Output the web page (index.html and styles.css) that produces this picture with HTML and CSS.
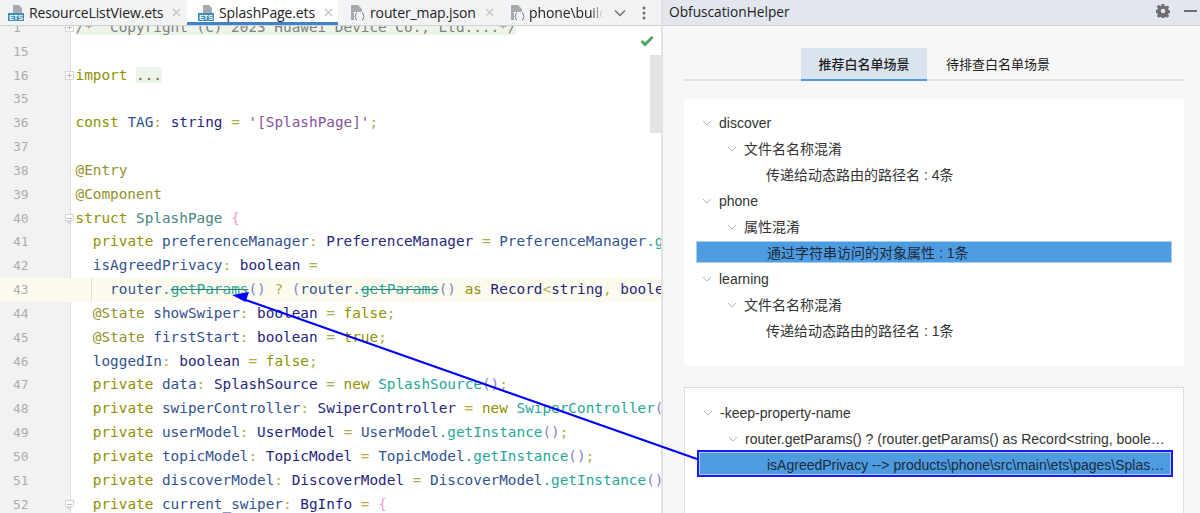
FILE: index.html
```html
<!DOCTYPE html>
<html lang="en">
<head>
<meta charset="utf-8">
<title>ObfuscationHelper</title>
<link rel="stylesheet" href="styles.css">
</head>
<body>
<div class="app">
  <section class="editor">
    <div class="tabs">
      <div class="tab t1">
        <svg class="ficon" viewBox="0 0 16 16"><path class="doc" d="M5 0h6l3 3v6H5z"/><rect class="ets" x="0" y="8" width="16" height="8"/><text class="etstxt" x="8" y="15">ETS</text></svg>
        <span class="tname">ResourceListView.ets</span>
        <svg class="close" viewBox="0 0 10 10"><path d="M1 1l8 8M9 1l-8 8"/></svg>
      </div>
      <div class="tab t2 active">
        <svg class="ficon" viewBox="0 0 16 16"><path class="doc" d="M5 0h6l3 3v6H5z"/><rect class="ets" x="0" y="8" width="16" height="8"/><text class="etstxt" x="8" y="15">ETS</text></svg>
        <span class="tname">SplashPage.ets</span>
        <svg class="close" viewBox="0 0 10 10"><path d="M1 1l8 8M9 1l-8 8"/></svg>
      </div>
      <div class="tab t3">
        <svg class="ficon" viewBox="0 0 16 16"><path class="doc" d="M2 0h7l4 4v11H2z"/><rect class="badge" x="5" y="7" width="11" height="9"/><path class="brace" d="M8 8c-2 0-1 3-2 3.500 1 .5 0 3.500 2 3.500M13 8c2 0 1 3 2 3.500-1 .5 0 3.500-2 3.500"/></svg>
        <span class="tname">router_map.json</span>
        <svg class="close" viewBox="0 0 10 10"><path d="M1 1l8 8M9 1l-8 8"/></svg>
      </div>
      <div class="tab t4">
        <svg class="ficon" viewBox="0 0 16 16"><path class="doc" d="M2 0h7l4 4v11H2z"/><rect class="badge" x="5" y="7" width="11" height="9"/><path class="brace" d="M8 8c-2 0-1 3-2 3.500 1 .5 0 3.500 2 3.500M13 8c2 0 1 3 2 3.500-1 .5 0 3.500-2 3.500"/></svg>
        <span class="tname fade">phone\build</span>
      </div>
      <div class="tabtools">
        <svg class="chev" viewBox="0 0 12 8"><path d="M1 1.500l5 5 5-5"/></svg>
        <svg class="dots" viewBox="0 0 4 14"><circle cx="2" cy="2" r="1.500"/><circle cx="2" cy="7" r="1.500"/><circle cx="2" cy="12" r="1.500"/></svg>
      </div>
    </div>
    <div class="codewrap">
      <div class="code">
        <div class="row"><span class="num">1</span><span class="fold plus"></span><span class="src"><span class="hl c">/*  Copyright (C) 2023 Huawei Device Co., Ltd....*/</span></span></div>
        <div class="row"><span class="num">15</span><span class="src"></span></div>
        <div class="row"><span class="num">16</span><span class="fold plus"></span><span class="src"><span class="k">import</span> <span class="hl o">...</span></span></div>
        <div class="row"><span class="num">35</span><span class="src"></span></div>
        <div class="row"><span class="num">36</span><span class="src"><span class="k">const</span> <span class="v">TAG</span><span class="p">:</span> <span class="ty">string</span> <span class="p">=</span> <span class="s">'[SplashPage]'</span><span class="p">;</span></span></div>
        <div class="row"><span class="num">37</span><span class="src"></span></div>
        <div class="row"><span class="num">38</span><span class="src"><span class="a">@Entry</span></span></div>
        <div class="row"><span class="num">39</span><span class="src"><span class="a">@Component</span></span></div>
        <div class="row"><span class="num">40</span><span class="fold open"></span><span class="src"><span class="k">struct</span> <span class="cn">SplashPage</span> <span class="b">{</span></span></div>
        <div class="row"><span class="num">41</span><span class="src">  <span class="k">private</span> <span class="v">preferenceManager</span><span class="p">:</span> <span class="ty">PreferenceManager</span> <span class="p">=</span> <span class="v">PreferenceManager</span><span class="m">.getInstance</span><span class="par">()</span></span></div>
        <div class="row"><span class="num">42</span><span class="src">  <span class="v">isAgreedPrivacy</span><span class="p">:</span> <span class="ty">boolean</span> <span class="p">=</span></span></div>
        <div class="row cur"><span class="num">43</span><span class="guide"></span><span class="src">    <span class="v">router</span><span class="m">.</span><span class="m del">getParams</span><span class="par">()</span> <span class="p">?</span> <span class="par">(</span><span class="v">router</span><span class="m">.</span><span class="m del">getParams</span><span class="par">()</span> <span class="k">as</span> <span class="ty">Record</span><span class="p">&lt;</span><span class="ty">string</span><span class="p">,</span> <span class="ty">boolean</span><span class="p">&gt;</span><span class="par">)</span></span></div>
        <div class="row"><span class="num">44</span><span class="src">  <span class="a">@State</span> <span class="v">showSwiper</span><span class="p">:</span> <span class="ty">boolean</span> <span class="p">=</span> <span class="k">false</span><span class="p">;</span></span></div>
        <div class="row"><span class="num">45</span><span class="src">  <span class="a">@State</span> <span class="v">firstStart</span><span class="p">:</span> <span class="ty">boolean</span> <span class="p">=</span> <span class="k">true</span><span class="p">;</span></span></div>
        <div class="row"><span class="num">46</span><span class="src">  <span class="v">loggedIn</span><span class="p">:</span> <span class="ty">boolean</span> <span class="p">=</span> <span class="k">false</span><span class="p">;</span></span></div>
        <div class="row"><span class="num">47</span><span class="src">  <span class="k">private</span> <span class="v">data</span><span class="p">:</span> <span class="ty">SplashSource</span> <span class="p">=</span> <span class="k">new</span> <span class="m">SplashSource</span><span class="par">()</span><span class="p">;</span></span></div>
        <div class="row"><span class="num">48</span><span class="src">  <span class="k">private</span> <span class="v">swiperController</span><span class="p">:</span> <span class="ty">SwiperController</span> <span class="p">=</span> <span class="k">new</span> <span class="m">SwiperController</span><span class="par">()</span><span class="p">;</span></span></div>
        <div class="row"><span class="num">49</span><span class="src">  <span class="k">private</span> <span class="v">userModel</span><span class="p">:</span> <span class="ty">UserModel</span> <span class="p">=</span> <span class="v">UserModel</span><span class="m">.getInstance</span><span class="par">()</span><span class="p">;</span></span></div>
        <div class="row"><span class="num">50</span><span class="src">  <span class="k">private</span> <span class="v">topicModel</span><span class="p">:</span> <span class="ty">TopicModel</span> <span class="p">=</span> <span class="v">TopicModel</span><span class="m">.getInstance</span><span class="par">()</span><span class="p">;</span></span></div>
        <div class="row"><span class="num">51</span><span class="src">  <span class="k">private</span> <span class="v">discoverModel</span><span class="p">:</span> <span class="ty">DiscoverModel</span> <span class="p">=</span> <span class="v">DiscoverModel</span><span class="m">.getInstance</span><span class="par">()</span><span class="p">;</span></span></div>
        <div class="row"><span class="num">52</span><span class="fold open"></span><span class="src">  <span class="k">private</span> <span class="v">current_swiper</span><span class="p">:</span> <span class="ty">BgInfo</span> <span class="p">=</span> <span class="b">{</span></span></div>
      </div>
      <svg class="check" viewBox="0 0 14 12"><path d="M1.500 6l3.500 3.500 7.500-7.500"/></svg>
      <div class="thumb"></div>
    </div>
  </section>
  <aside class="tool">
    <header class="toolhead">
      <span class="tooltitle">ObfuscationHelper</span>
      <svg class="gear" viewBox="0 0 14 14"><path fill-rule="evenodd" d="M5.800 0h2.400l.4 2 1.200.5 1.700-1.100 1.700 1.700-1.100 1.700.5 1.200 2 .4v2.400l-2 .4-.5 1.200 1.100 1.700-1.700 1.700-1.700-1.100-1.200.5-.4 2H5.800l-.4-2-1.200-.5-1.700 1.100-1.700-1.700 1.100-1.700-.5-1.200-2-.4V5.800l2-.4.5-1.200-1.100-1.700 1.700-1.700 1.700 1.100 1.200-.5zM7 4.800a2.200 2.200 0 1 0 0 4.400 2.200 2.200 0 0 0 0-4.400z"/></svg>
      <span class="minus"></span>
    </header>
    <div class="toolbody">
      <nav class="seg">
        <span class="segtab on">推荐白名单场景</span>
        <span class="segtab">待排查白名单场景</span>
      </nav>
      <div class="panel top">
        <div class="node l0"><svg class="tw" viewBox="0 0 10 6"><path d="M1 1l4 4 4-4"/></svg>discover</div>
        <div class="node l1"><svg class="tw" viewBox="0 0 10 6"><path d="M1 1l4 4 4-4"/></svg>文件名名称混淆</div>
        <div class="node l2">传递给动态路由的路径名 : 4条</div>
        <div class="node l0"><svg class="tw" viewBox="0 0 10 6"><path d="M1 1l4 4 4-4"/></svg>phone</div>
        <div class="node l1"><svg class="tw" viewBox="0 0 10 6"><path d="M1 1l4 4 4-4"/></svg>属性混淆</div>
        <div class="node l2 sel">通过字符串访问的对象属性 : 1条</div>
        <div class="node l0"><svg class="tw" viewBox="0 0 10 6"><path d="M1 1l4 4 4-4"/></svg>learning</div>
        <div class="node l1"><svg class="tw" viewBox="0 0 10 6"><path d="M1 1l4 4 4-4"/></svg>文件名名称混淆</div>
        <div class="node l2">传递给动态路由的路径名 : 1条</div>
      </div>
      <div class="panel bottom">
        <div class="node l0"><svg class="tw" viewBox="0 0 10 6"><path d="M1 1l4 4 4-4"/></svg><span class="ell">-keep-property-name</span></div>
        <div class="node l1"><svg class="tw" viewBox="0 0 10 6"><path d="M1 1l4 4 4-4"/></svg><span class="ell">router.getParams() ? (router.getParams() as Record&lt;string, boolean&gt;)['isAgreedPrivacy']</span></div>
        <div class="node l2 sel marked"><span class="ell">isAgreedPrivacy --&gt; products\phone\src\main\ets\pages\SplashPage.ets</span></div>
      </div>
    </div>
  </aside>
  <svg class="arrow" viewBox="0 0 1200 513"><path class="shaft" d="M697 459L240 298"/><path class="head" d="M232 295l17-3-3.500 10z"/></svg>
</div>
</body>
</html>
```
FILE: styles.css
```css
* { box-sizing: border-box; }
html, body { margin: 0; height: 100%; overflow: hidden; }
body { background: #fff; }
.app { position: relative; display: flex; width: 1200px; height: 513px; overflow: hidden; }

.editor { width: 663px; flex: none; display: flex; flex-direction: column; border-right: 2px solid #e2e2e2; }
.tabs { height: 26px; flex: none; display: flex; align-items: stretch; background: #f2f3f5; border-bottom: 1px solid #cfd1d4; font: 14px/24px "Open Sans", "Noto Sans", sans-serif; color: #222; }
.tab { display: flex; align-items: center; white-space: nowrap; overflow: hidden; }
.t1 { width: 187px; padding-left: 8px; }
.t2 { width: 151px; padding-left: 11px; background: #fff; box-shadow: inset 0 -3px 0 #4083c9; }
.t3 { width: 171px; padding-left: 11px; }
.t4 { width: 97px; padding-left: 0; }
.ficon { width: 16px; height: 16px; flex: none; margin-right: 5px; }
.t4 .ficon { margin-right: 4px; }
.doc { fill: #a6abb2; }
.ets { fill: #3d8fb8; }
.etstxt { font: bold 7px "Liberation Sans", sans-serif; fill: #fff; text-anchor: middle; }
.badge { fill: #f2f3f5; }
.brace { fill: none; stroke: #6e6e6e; stroke-width: 1; }
.tname { letter-spacing: -.12px; }
.fade { width: 74px; overflow: hidden; -webkit-mask-image: linear-gradient(90deg, #000 84%, transparent); mask-image: linear-gradient(90deg, #000 84%, transparent); }
.close { width: 9px; height: 9px; margin-left: 9px; flex: none; }
.close path { stroke: #bcbcbc; stroke-width: 1.200; fill: none; }
.tabtools { display: flex; align-items: center; flex: 1; padding-left: 8px; }
.chev { width: 12px; height: 8px; }
.chev path { fill: none; stroke: #6e6e6e; stroke-width: 1.500; }
.dots { width: 4px; height: 14px; margin-left: 16px; }
.dots circle { fill: #6e6e6e; }

.codewrap { position: relative; flex: 1; overflow: hidden; }
.code { margin-top: -10px; }
.row { position: relative; display: flex; height: 23.83px; font: 14.36px/23.83px "DejaVu Sans Mono", monospace; white-space: pre; }
.num { width: 71px; flex: none; padding-left: 13px; background: #f2f2f2; border-right: 1px solid #dedede; color: #adadad; font-size: 13px; }
.src { padding-left: 4.500px; color: #34528f; }
.cur { background: #fdfbf0; }
.cur .num { background: #fdfbf0; border-right-color: #fdfbf0; }
.guide { position: absolute; left: 91px; top: 0; bottom: 0; border-left: 1px solid #e4e2d8; }
.fold { position: absolute; left: 65px; top: 7px; width: 9px; height: 9px; background: #fff; border: 1px solid #d6d6d6; }
.fold.plus::before { content: ""; position: absolute; left: 1px; right: 1px; top: 3px; border-top: 1px solid #bdbdbd; }
.fold.plus::after { content: ""; position: absolute; top: 1px; bottom: 1px; left: 3px; border-left: 1px solid #bdbdbd; }
.fold.open { border-bottom: 0; height: 7px; }
.fold.open::before { content: ""; position: absolute; left: 1px; right: 1px; top: 3px; border-top: 1px solid #bdbdbd; }
.fold.open::after { content: ""; position: absolute; left: -1px; top: 5px; border: 4.500px solid transparent; border-top-color: #d6d6d6; border-bottom: 0; }

.k { color: #8f9100; }
.a { color: #94912a; }
.v { color: #34528f; }
.ty { color: #26267c; }
.cn { color: #4a8682; }
.p { color: #b0ac4c; }
.s { color: #84549a; }
.b { color: #f29ccf; }
.m { color: #27a797; }
.par { color: #8085cc; }
.c { color: #808080; }
.hl { background: #edf5ea; }
.o { color: #70703a; }
.del { text-decoration: line-through; text-decoration-color: #2f7f74; }

.check { position: absolute; right: 7px; top: 9px; width: 14px; height: 12px; }
.check path { fill: none; stroke: #49a35c; stroke-width: 2.800; }
.thumb { position: absolute; right: 0; top: 29px; width: 11px; height: 78px; background: #e3e3e3; }

.tool { flex: 1; min-width: 0; display: flex; flex-direction: column; background: #f7f7f7; }
.toolhead { height: 26px; flex: none; display: flex; align-items: center; padding: 0 0 3px 6px; background: #e2e6ee; border-bottom: 1px solid #cfd1d4; font: 13.700px "Open Sans", "Noto Sans", sans-serif; color: #222; }
.tooltitle { flex: 1; }
.gear { width: 14px; height: 14px; fill: #6e6e6e; }
.minus { width: 13px; height: 2px; margin-left: 14px; margin-right: 3px; background: #6e6e6e; }
.toolbody { flex: 1; padding: 22px 16px 0 21px; }
.seg { display: flex; justify-content: flex-start; padding-left: 117px; height: 33px; border-bottom: 2px solid #e3e3e3; font: 13px/31px "Noto Sans CJK SC", sans-serif; color: #222; }
.segtab { padding: 0 19px; height: 33px; }
.segtab.on { width: 126px; padding: 0; text-align: center; background: #d9e4ef; box-shadow: inset 0 -2px 0 #4e9ade; font-weight: 500; }
.panel { background: #fff; padding: 11px 12px 0; font: 14px/26px "Liberation Sans", "Noto Sans CJK SC", sans-serif; color: #333; }
.top { margin-top: 18px; height: 267px; }
.bottom { margin-top: 21px; height: 140px; border: 1px solid #dcdcdc; padding: 12px 10px 0 12px; }
.node { display: flex; align-items: center; height: 26px; white-space: nowrap; overflow: hidden; }
.l0 { padding-left: 6px; }
.l1 { padding-left: 31px; }
.l2 { padding-left: 70px; }
.bottom .l1 { padding-right: 3px; }
.tw { width: 10px; height: 6px; margin-right: 7px; flex: none; }
.tw path { fill: none; stroke: #b5b5b5; stroke-width: 1; }
.ell { min-width: 0; overflow: hidden; text-overflow: ellipsis; }
.sel { background: #4d9be0; border: 1px solid #a8d1f5; height: 22px; margin: 1px 0 3px; padding-top: 2px; color: #1c2a38; }
.marked { height: 27px; margin: -2px 0 0; border: 2px solid #1a1aff; outline: 1px solid #a8d1f5; outline-offset: -3px; padding: 3px 3px 0 68px; }

.arrow { position: absolute; inset: 0; width: 1200px; height: 513px; pointer-events: none; }
.shaft { stroke: #0000ff; stroke-width: 2; fill: none; }
.head { fill: #0000ff; }
```
